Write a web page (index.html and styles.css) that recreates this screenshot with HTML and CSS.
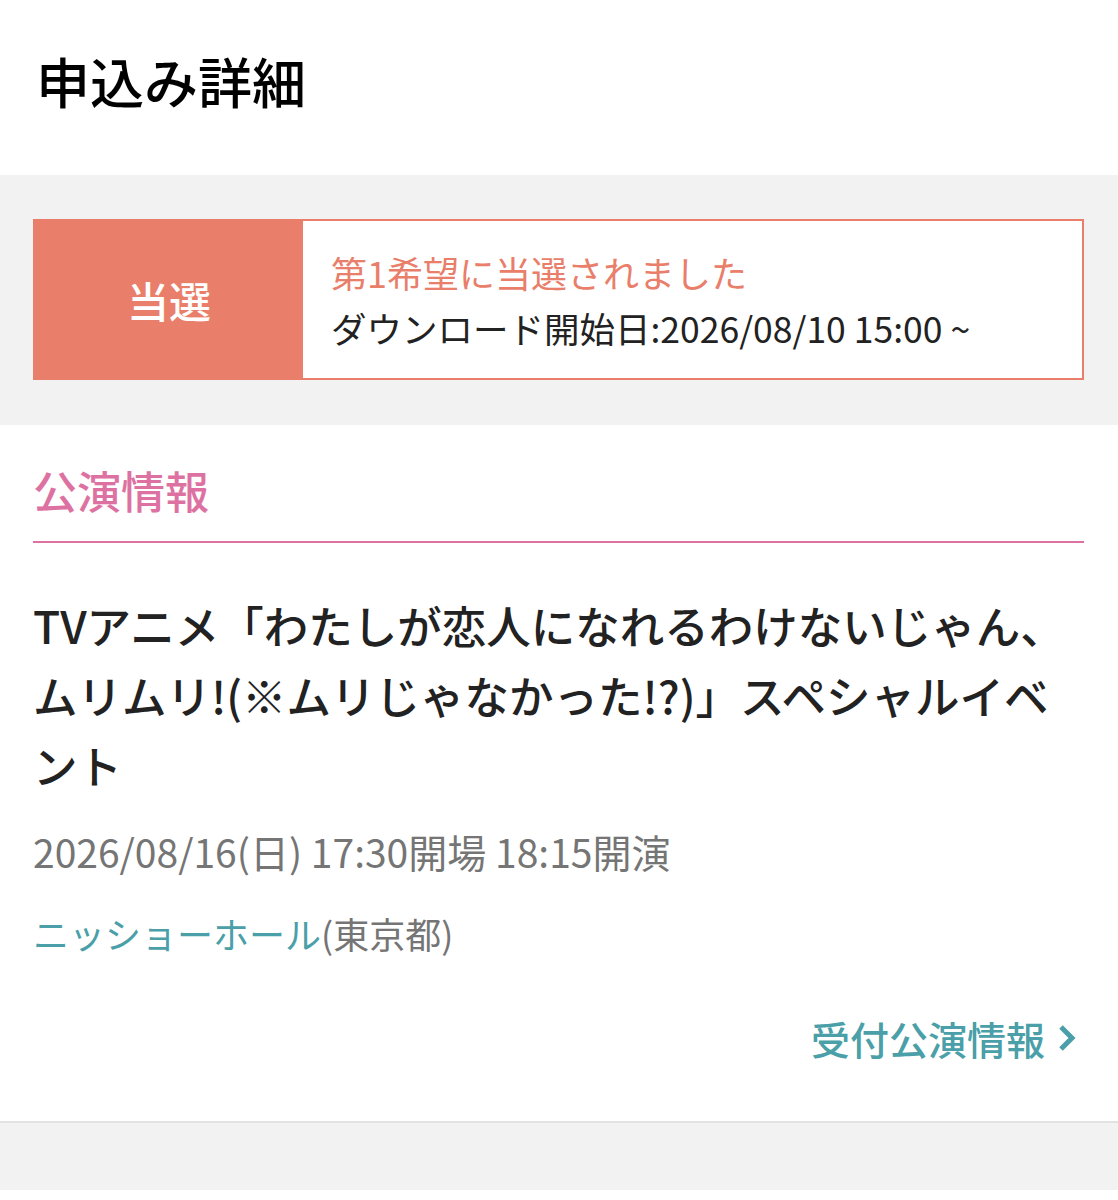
FILE: index.html
```html
<!DOCTYPE html>
<html lang="ja">
<head>
  <meta charset="UTF-8" />
  <meta name="viewport" content="width=device-width, initial-scale=1.0"/>
  <title>申込み詳細</title>
  <link rel="stylesheet" href="styles.css">
</head>
<body>
  <header class="page-header">
    <h1>申込み詳細</h1>
  </header>

  <section class="status-band">
    <div class="status-card">
      <div class="status-badge">当選</div>
      <div class="status-detail">
        <p class="status-main">第1希望に当選されました</p>
        <p class="status-sub">ダウンロード開始日:2026/08/10 15:00 ~</p>
      </div>
    </div>
  </section>

  <section class="info">
    <h2 class="info-heading">公演情報</h2>
    <p class="event-title">TVアニメ「わたしが恋人になれるわけないじゃん、ムリムリ!(※ムリじゃなかった!?)」スペシャルイベント</p>
    <p class="event-date">2026/08/16(日) 17:30開場 18:15開演</p>
    <p class="event-venue"><a href="#" class="venue-link">ニッショーホール</a>(東京都)</p>
    <div class="more-row">
      <a href="#" class="more-link">受付公演情報
        <svg class="chevron" width="20" height="28" viewBox="0 0 20 28"><polyline points="4,3 15,14 4,25" fill="none" stroke="currentColor" stroke-width="5" stroke-linejoin="miter"/></svg>
      </a>
    </div>
  </section>

  <footer class="page-foot"></footer>
</body>
</html>
```

FILE: styles.css
```css
body {
  margin: 0;
  font-family: "Noto Sans CJK JP", "Noto Sans", sans-serif;
  background: #fff;
  color: #222;
}
p {
  margin: 0;
}
a {
  text-decoration: none;
}
.page-header {
  height: 175px;
  box-sizing: border-box;
  padding: 0 36px 14px;
  display: flex;
  align-items: center;
}
.page-header h1 {
  margin: 0;
  font-size: 54px;
  font-weight: 500;
  color: #000;
}
.status-band {
  background: #f2f2f2;
  padding: 44px 34px 45px 33px;
}
.status-card {
  display: flex;
  height: 161px;
  box-sizing: border-box;
  border: 2px solid #e97e6a;
  background: #fff;
}
.status-badge {
  width: 268px;
  background: #e97e6a;
  color: #fff;
  font-size: 42px;
  font-weight: 500;
  display: flex;
  align-items: center;
  justify-content: center;
}
.status-detail {
  display: flex;
  flex-direction: column;
  justify-content: center;
  padding: 0 28px;
  gap: 4px;
}
.status-main {
  color: #e97e6a;
  font-size: 36px;
  line-height: 52px;
}
.status-sub {
  color: #222;
  font-size: 35.5px;
  line-height: 52px;
}
.info {
  padding: 35px 34px 58px 33px;
}
.info-heading {
  margin: 0;
  font-size: 44px;
  font-weight: 500;
  line-height: 60px;
  color: #dd72a2;
  padding-bottom: 21px;
  border-bottom: 2px solid #dd72a2;
}
.event-title {
  margin-top: 47px;
  font-size: 44.5px;
  font-weight: 500;
  line-height: 70px;
  color: #222;
  padding-right: 6px;
}
.event-date {
  margin-top: 26px;
  font-size: 39px;
  line-height: 50px;
  color: #757575;
}
.event-venue {
  margin-top: 32px;
  font-size: 36px;
  line-height: 50px;
  color: #757575;
}
.venue-link {
  color: #4a9fa8;
}
.more-row {
  margin-top: 55px;
  display: flex;
  justify-content: flex-end;
  padding-right: 7px;
}
.more-link {
  color: #4a9fa8;
  font-size: 39px;
  font-weight: 500;
  line-height: 50px;
  display: flex;
  align-items: center;
  gap: 12px;
}
.page-foot {
  height: 67px;
  background: #f2f2f2;
  border-top: 2px solid #e2e2e2;
}
```
